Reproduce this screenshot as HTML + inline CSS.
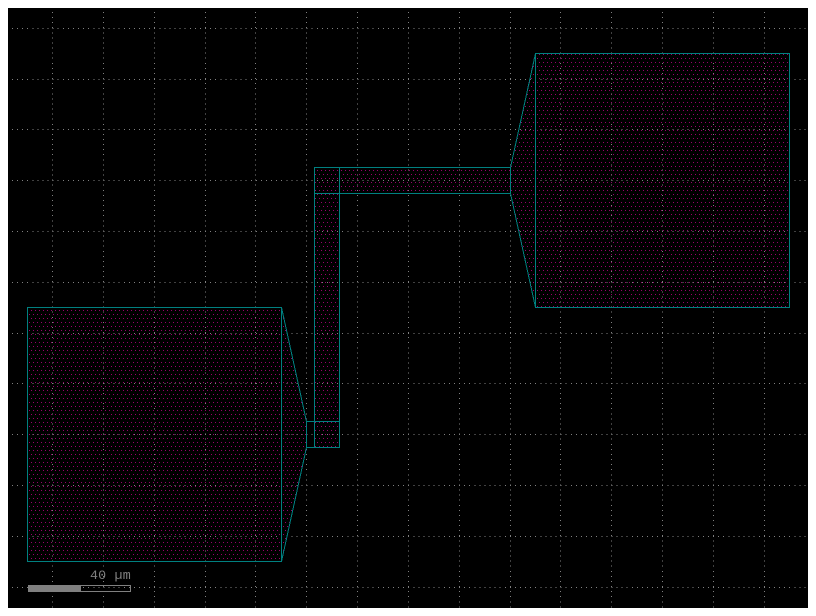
<!DOCTYPE html>
<html><head><meta charset="utf-8"><style>
html,body{margin:0;padding:0;background:#fff;width:816px;height:616px;overflow:hidden}
svg{position:absolute;left:0;top:0;display:block}
text{font-family:"Liberation Mono",monospace}
</style></head><body>
<svg width="816" height="616" viewBox="0 0 816 616" shape-rendering="crispEdges">
<defs>
<pattern id="p" width="4" height="8" patternUnits="userSpaceOnUse" x="1" y="2">
<rect x="0" y="0" width="1" height="1" fill="#98006c"/>
<rect x="2" y="4" width="1" height="1" fill="#98006c"/>
</pattern>
</defs>
<rect x="8" y="8" width="800" height="600" fill="#000"/>
<g fill="url(#p)">
<rect x="27" y="307" width="255" height="255"/>
<rect x="535" y="53" width="255" height="255"/>
<rect x="314" y="167" width="26" height="281"/>
<rect x="340" y="167" width="171" height="27"/>
<polygon points="281,307 307,421 307,447 281,561"/>
<polygon points="535,53 510,167 510,193 535,307"/>
</g>
<g stroke="#808080" stroke-width="1" stroke-dasharray="1 4.08" fill="none">
<path d="M12 28.5H808M12 79.5H808M12 129.5H808M12 180.5H808M12 231.5H808M12 282.5H808M12 333.5H808M12 383.5H808M12 434.5H808M12 485.5H808M12 536.5H808M12 587.5H808"/>
<path d="M52.5 12V608M103.5 12V608M154.5 12V608M205.5 12V608M255.5 12V608M306.5 12V608M357.5 12V608M408.5 12V608M459.5 12V608M510.5 12V608M560.5 12V608M611.5 12V608M662.5 12V608M713.5 12V608M764.5 12V608"/>
</g>
<g fill="none" stroke="#008080" stroke-width="1">
<rect x="27.5" y="307.5" width="254" height="254"/>
<rect x="535.5" y="53.5" width="254" height="254"/>
<rect x="314.5" y="167.5" width="25" height="280"/>
<rect x="314.5" y="167.5" width="196" height="26"/>
<path d="M281.5 307.5L306.5 421.5V447.5L281.5 561.5"/>
<path d="M535.5 53.5L510.5 167.5V193.5L535.5 307.5"/>
<path d="M306.5 421.5H339.5M306.5 447.5H339.5"/>
</g>
<rect x="28" y="585" width="52" height="7" fill="#808080"/>
<rect x="80.5" y="585.5" width="50" height="6" fill="none" stroke="#808080"/>
<text x="90" y="579" font-size="13.3" letter-spacing="0.2" fill="#808080" xml:space="preserve">40 µm</text>
</svg>
</body></html>
